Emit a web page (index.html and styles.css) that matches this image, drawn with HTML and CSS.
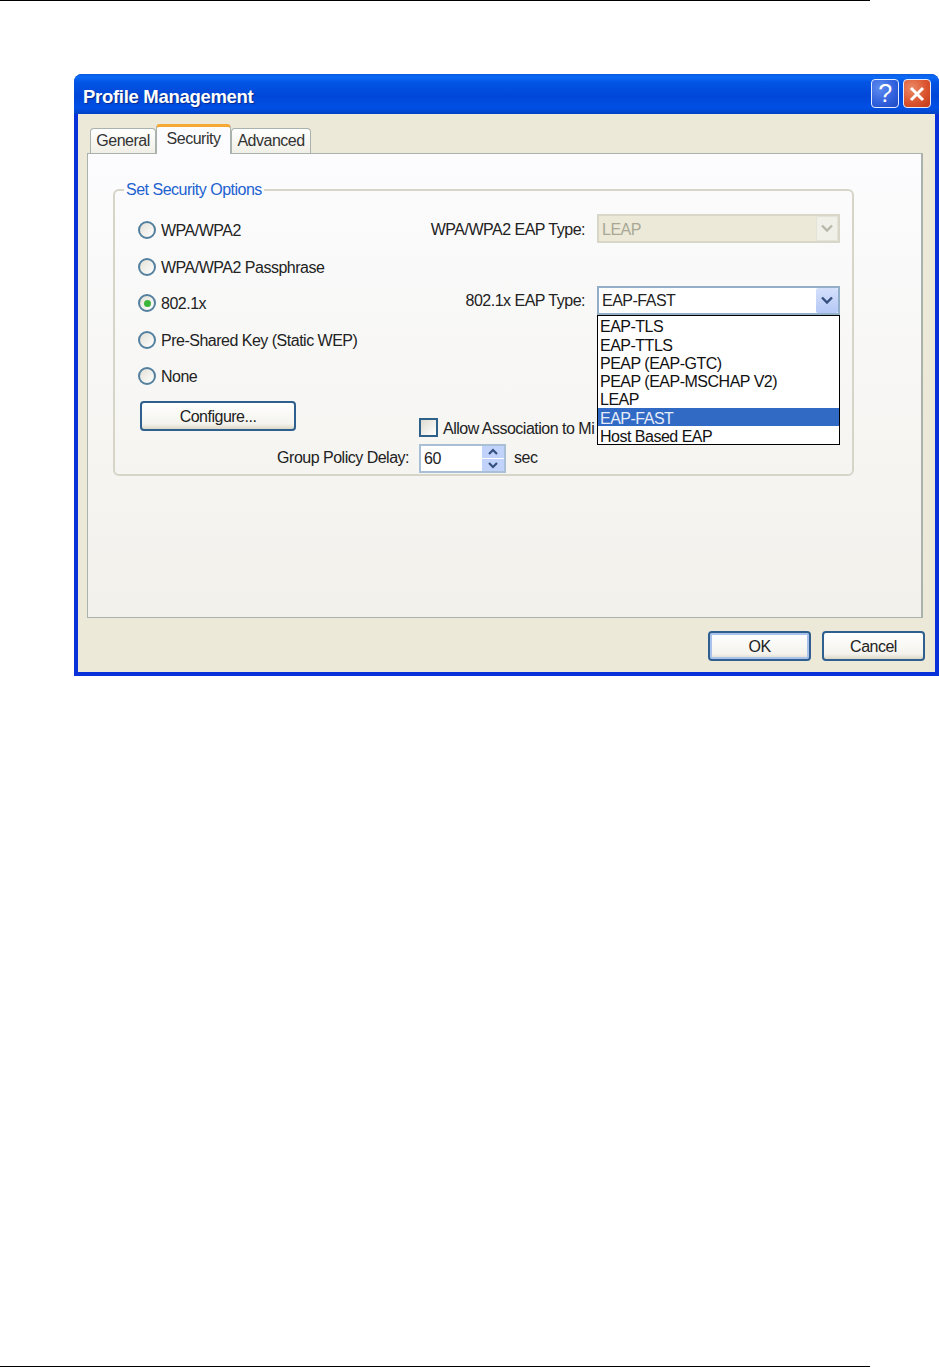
FILE: index.html
```html
<!DOCTYPE html>
<html lang="en">
<head>
    <meta charset="UTF-8">
    <title>Profile Management</title>
    <link rel="stylesheet" href="styles.css">
</head>
<body>
    <div class="page">
        <div class="rule"></div>

        <div class="window">
            <div class="titlebar">
                <span class="title">Profile Management</span>
                <div class="title-buttons">
                    <span class="title-btn help">?</span>
                    <span class="title-btn close">
                        <svg width="18" height="18" viewBox="0 0 18 18"><path d="M3 3l12 12M15 3L3 15" stroke="#fff" stroke-width="3" fill="none"/></svg>
                    </span>
                </div>
            </div>

            <div class="client">
                <div class="tabs">
                    <span class="tab">General</span>
                    <span class="tab active">Security</span>
                    <span class="tab">Advanced</span>
                </div>

                <div class="panel">
                    <fieldset class="group">
                        <legend>Set Security Options</legend>

                        <div class="option-row">
                            <label class="radio-line"><span class="radio"></span>WPA/WPA2</label>
                            <div class="field">
                                <span class="field-label">WPA/WPA2 EAP Type:</span>
                                <div class="combo disabled">
                                    <span class="combo-text">LEAP</span>
                                    <span class="combo-btn">
                                        <svg width="14" height="9" viewBox="0 0 14 9"><path d="M2 1.500l5 5 5-5" stroke="#b9b8ab" stroke-width="2.400" fill="none"/></svg>
                                    </span>
                                </div>
                            </div>
                        </div>

                        <div class="option-row">
                            <label class="radio-line"><span class="radio"></span>WPA/WPA2 Passphrase</label>
                        </div>

                        <div class="option-row">
                            <label class="radio-line"><span class="radio checked"></span>802.1x</label>
                            <div class="field raised">
                                <span class="field-label">802.1x EAP Type:</span>
                                <div class="combo">
                                    <span class="combo-text">EAP-FAST</span>
                                    <span class="combo-btn">
                                        <svg width="14" height="9" viewBox="0 0 14 9"><path d="M2 1.500l5 5 5-5" stroke="#35507f" stroke-width="2.400" fill="none"/></svg>
                                    </span>
                                    <ul class="combo-list">
                                        <li>EAP-TLS</li>
                                        <li>EAP-TTLS</li>
                                        <li>PEAP (EAP-GTC)</li>
                                        <li>PEAP (EAP-MSCHAP V2)</li>
                                        <li>LEAP</li>
                                        <li class="selected">EAP-FAST</li>
                                        <li>Host Based EAP</li>
                                    </ul>
                                </div>
                            </div>
                        </div>

                        <div class="option-row">
                            <label class="radio-line"><span class="radio"></span>Pre-Shared Key (Static WEP)</label>
                        </div>

                        <div class="option-row">
                            <label class="radio-line"><span class="radio"></span>None</label>
                        </div>

                        <div class="lower">
                            <button class="btn configure">Configure...</button>
                            <label class="check-line"><span class="checkbox"></span><span class="check-text">Allow Association to Mi</span></label>
                            <span class="delay-label">Group Policy Delay:</span>
                            <div class="delay-field">
                                <div class="spin">
                                    <span class="spin-text">60</span>
                                    <span class="spin-btns">
                                        <span class="spin-btn"><svg width="12" height="8" viewBox="0 0 12 8"><path d="M2 6l4-4 4 4" stroke="#35507f" stroke-width="2.200" fill="none"/></svg></span>
                                        <span class="spin-btn"><svg width="12" height="8" viewBox="0 0 12 8"><path d="M2 2l4 4 4-4" stroke="#35507f" stroke-width="2.200" fill="none"/></svg></span>
                                    </span>
                                </div>
                                <span class="unit">sec</span>
                            </div>
                        </div>
                    </fieldset>
                </div>

                <div class="actions">
                    <button class="btn default">OK</button>
                    <button class="btn">Cancel</button>
                </div>
            </div>
        </div>

        <div class="rule bottom"></div>
    </div>
</body>
</html>
```

FILE: styles.css
```css
html, body {
    margin: 0;
    padding: 0;
    background: #fff;
}

body {
    font-family: 'Liberation Sans', Arial, sans-serif;
    font-size: 16px;
    letter-spacing: -0.5px;
    color: #222;
}

.page {
    height: 1367px;
    display: flex;
    flex-direction: column;
    overflow: hidden;
}

.rule {
    width: 870px;
    height: 1px;
    background: #000;
    flex: none;
}

.rule.bottom {
    margin-top: auto;
}

/* window frame */
.window {
    margin: 73px 0 0 74px;
    width: 865px;
    height: 602px;
    flex: none;
    display: flex;
    flex-direction: column;
    box-sizing: border-box;
    border-radius: 8px 8px 0 0;
    background: #0831d9;
    overflow: hidden;
}

.titlebar {
    height: 40px;
    flex: none;
    display: flex;
    align-items: center;
    justify-content: space-between;
    padding: 0 8px 0 9px;
    background: linear-gradient(to bottom, #0a5be0 0%, #0a6af5 8%, #0355e5 20%, #0047d8 55%, #0050e6 85%, #0242c4 100%);
}

.title {
    color: #fff;
    font-weight: bold;
    font-size: 18.500px;
    letter-spacing: -0.300px;
    margin-top: 6px;
    text-shadow: 1px 1px 1px #0a2a8c;
}

.title-buttons {
    display: flex;
    gap: 4px;
    margin-top: -1px;
}

.title-btn {
    width: 28px;
    height: 29px;
    box-sizing: border-box;
    border: 1px solid #e4ecfb;
    border-radius: 4px;
    display: flex;
    align-items: center;
    justify-content: center;
    color: #fff;
}

.title-btn.help {
    font-size: 25px;
    background: radial-gradient(circle at 30% 30%, #5f8cf0, #2f5fdc 60%, #1f48c0);
}

.title-btn.close {
    background: radial-gradient(circle at 30% 30%, #ec8a66, #d9512c 60%, #c03a1a);
}

.client {
    flex: 1;
    margin: 0 4px 4px;
    background: #ece9d8;
    display: flex;
    flex-direction: column;
}

/* tabs */
.tabs {
    height: 39px;
    flex: none;
    display: flex;
    align-items: flex-end;
    padding-left: 12px;
    position: relative;
    z-index: 1;
}

.tab {
    height: 25px;
    box-sizing: border-box;
    padding: 0 2px;
    border: 1px solid #a9b2ad;
    border-bottom: none;
    border-radius: 4px 4px 0 0;
    background: linear-gradient(to bottom, #fff, #f0efe6);
    color: #333;
    display: flex;
    align-items: center;
    justify-content: center;
}

.tab:nth-child(1) {
    width: 66px;
}

.tab:nth-child(3) {
    width: 80px;
}

.tab.active {
    width: 75px;
    height: 30px;
    margin-bottom: -1px;
    padding-bottom: 3px;
    border-top: 3px solid #f5a833;
    background: #fcfcfe;
}

/* tab page */
.panel {
    height: 465px;
    flex: none;
    margin: 0 12px 0 9px;
    box-sizing: border-box;
    border: 1px solid #a9b2ad;
    border-right-width: 2px;
    background: linear-gradient(to bottom, #fcfcfe, #f2f1eb);
    padding: 26px 67px 0 25px;
}

.group {
    margin: 0;
    padding: 12px 12px 0 23px;
    height: 296px;
    box-sizing: border-box;
    border: 2px solid #d6d5c8;
    border-radius: 6px;
    min-width: 0;
}

.group legend {
    color: #2262d0;
    padding: 0 2px;
    margin-left: -14px;
    line-height: 20px;
}

.option-row {
    height: 36.500px;
    display: flex;
    align-items: center;
    justify-content: space-between;
}

.radio-line, .check-line {
    display: flex;
    align-items: center;
    gap: 5px;
    padding-top: 2px;
}

.radio {
    width: 18px;
    height: 18px;
    margin-top: -2px;
    box-sizing: border-box;
    border: 2px solid #54809f;
    border-radius: 50%;
    background: linear-gradient(135deg, #e2e0d6, #fff);
    display: flex;
    align-items: center;
    justify-content: center;
}

.radio.checked::after {
    content: "";
    width: 7px;
    height: 7px;
    border-radius: 50%;
    background: #3bb53b;
}

.field {
    display: flex;
    align-items: center;
    gap: 12px;
    margin-top: -4px;
}

.field-label {
    padding-top: 4px;
}

.field.raised {
    margin-top: -5px;
}

.field.raised .field-label {
    padding-top: 0;
}

.combo {
    width: 243px;
    height: 29px;
    box-sizing: border-box;
    border: 2px solid #93aec8;
    background: #fff;
    display: flex;
    align-items: center;
    justify-content: space-between;
    position: relative;
}

.combo-text {
    padding-left: 3px;
}

.combo-btn {
    width: 22px;
    height: 25px;
    box-sizing: border-box;
    border-radius: 2px;
    background: linear-gradient(to bottom, #d5e0fb, #b4c8f6);
    display: flex;
    align-items: center;
    justify-content: center;
}

.combo.disabled {
    border-color: #d8d6c8;
    background: #ece9d8;
    color: #a9a896;
}

.combo.disabled .combo-text {
    padding-top: 4px;
}

.combo.disabled .combo-btn {
    background: #f1f0e8;
    border: 1px solid #e4e3d8;
}

.combo-list {
    position: absolute;
    top: 27px;
    left: -2px;
    width: 243px;
    box-sizing: border-box;
    margin: 0;
    padding: 0;
    list-style: none;
    background: #fff;
    color: #111;
    border: 1px solid #000;
    z-index: 2;
}

.combo-list li {
    height: 18.300px;
    line-height: 21px;
    padding-left: 2px;
}

.combo-list li.selected {
    background: #316ac5;
    color: #e6ecf8;
}

/* configure button, delay */
.lower {
    display: grid;
    grid-template-columns: 281px auto;
    margin-top: 6px;
}

.btn {
    font: inherit;
    letter-spacing: inherit;
    color: #222;
    width: 103px;
    height: 30px;
    padding: 2px 0 0;
    box-sizing: border-box;
    border: 2px solid #2f5f8f;
    border-radius: 4px;
    background: linear-gradient(to bottom, #fff, #f4f3ed 80%, #dcd8c8);
}

.btn.configure {
    width: 156px;
    margin-left: 2px;
}

.btn.default {
    box-shadow: inset 0 0 0 2px #a8c2ec;
}

.check-line {
    align-self: end;
    margin-bottom: -7px;
    white-space: nowrap;
}

.checkbox {
    width: 19px;
    height: 19px;
    margin-top: -2px;
    box-sizing: border-box;
    border: 2px solid #2f6088;
    background: linear-gradient(135deg, #dedcd0, #fff);
}

.delay-label {
    grid-row: 2;
    justify-self: end;
    align-self: center;
    margin-right: 10px;
    margin-top: 12px;
}

.delay-field {
    grid-row: 2;
    grid-column: 2;
    display: flex;
    align-items: center;
    gap: 8px;
    margin-top: 13px;
}

.spin {
    width: 87px;
    height: 29px;
    box-sizing: border-box;
    border: 2px solid #a9bfd6;
    background: #fff;
    display: flex;
    align-items: center;
    justify-content: space-between;
}

.spin-text {
    padding: 2px 0 0 3px;
}

.spin-btns {
    width: 22px;
    display: flex;
    flex-direction: column;
    gap: 1px;
}

.spin-btn {
    height: 12px;
    background: #c1d3fb;
    display: flex;
    align-items: center;
    justify-content: center;
}

/* bottom buttons */
.actions {
    flex: 1;
    display: flex;
    justify-content: flex-end;
    gap: 11px;
    padding: 13px 10px 0 0;
}
```
